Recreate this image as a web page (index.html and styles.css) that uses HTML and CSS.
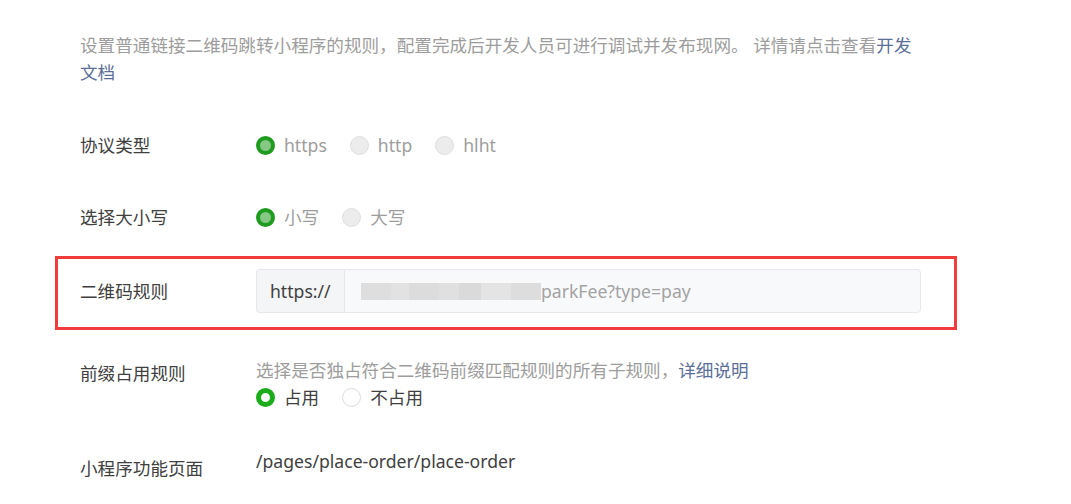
FILE: index.html
```html
<!DOCTYPE html>
<html lang="zh-CN">
<head>
    <meta charset="UTF-8">
    <meta name="viewport" content="width=device-width, initial-scale=1.0">
    <title>扫普通链接二维码打开小程序</title>
    <link rel="stylesheet" href="styles.css">
</head>
<body>
    <div class="page">
        <p class="intro">
            设置普通链接二维码跳转小程序的规则，配置完成后开发人员可进行调试并发布现网。 详情请点击查看<a href="#" class="link">开发文档</a>
        </p>

        <div class="form-row row-protocol">
            <div class="label">协议类型</div>
            <div class="control radios">
                <label class="radio disabled checked"><span class="dot"></span>https</label>
                <label class="radio disabled"><span class="dot"></span>http</label>
                <label class="radio disabled"><span class="dot"></span>hlht</label>
            </div>
        </div>

        <div class="form-row row-case">
            <div class="label">选择大小写</div>
            <div class="control radios">
                <label class="radio disabled checked"><span class="dot"></span>小写</label>
                <label class="radio disabled"><span class="dot"></span>大写</label>
            </div>
        </div>

        <div class="form-row row-rule highlight">
            <div class="label">二维码规则</div>
            <div class="control input-group">
                <span class="prefix">https://</span>
                <div class="input">
                    <span class="mosaic"></span><span class="input-text">parkFee?type=pay</span>
                </div>
            </div>
        </div>

        <div class="form-row row-prefix top">
            <div class="label offset-small">前缀占用规则</div>
            <div class="control">
                <div class="hint">选择是否独占符合二维码前缀匹配规则的所有子规则，<a href="#" class="link">详细说明</a></div>
                <div class="radios">
                    <label class="radio checked"><span class="dot"></span>占用</label>
                    <label class="radio"><span class="dot"></span>不占用</label>
                </div>
            </div>
        </div>

        <div class="form-row row-page top">
            <div class="label offset-large">小程序功能页面</div>
            <div class="control value">/pages/place-order/place-order</div>
        </div>
    </div>
</body>
</html>
```

FILE: styles.css
```css
body {
    margin: 0;
    background-color: #fff;
    font-family: "Noto Sans", "Noto Sans CJK SC", sans-serif;
    font-size: 17.6px;
    color: #404040;
}

.page {
    width: 841px;
    padding: 32px 0 0 80px;
}

.intro {
    margin: 0;
    line-height: 27px;
    color: #9d9d9d;
}

.link {
    color: #5a6e98;
    text-decoration: none;
}

.form-row {
    display: flex;
    align-items: center;
    line-height: 27px;
}

.form-row.top {
    align-items: flex-start;
}

.label {
    width: 176px;
    flex-shrink: 0;
}

.offset-small {
    padding-top: 3px;
}

.offset-large {
    padding-top: 7px;
}

.control {
    flex: 1;
}

.row-protocol {
    margin-top: 39px;
    height: 40px;
}

.row-case {
    margin-top: 32px;
    height: 40px;
}

.row-rule {
    margin-top: 19px;
}

.row-prefix {
    margin-top: 27px;
}

.row-page {
    margin-top: 37px;
}

/* red annotation frame round the rule row */
.highlight {
    border: 3px solid #f23b3b;
    margin-left: -25px;
    margin-right: -36px;
    padding: 10px 33px 14px 22px;
}

/* radios */
.radios {
    display: flex;
    align-items: center;
}

.radio {
    display: flex;
    align-items: center;
    margin-right: 23px;
    height: 27px;
}

.radio .dot {
    box-sizing: border-box;
    width: 19px;
    height: 19px;
    border-radius: 50%;
    border: 1px solid #dcdcdc;
    background-color: #fff;
    margin-right: 9px;
}

.radio.checked .dot {
    border: 5px solid #1aad19;
    background-color: #fff;
}

.radio.disabled {
    color: #9d9d9d;
}

.radio.disabled .dot {
    background-color: #ececec;
    border-color: #dedede;
}

.radio.disabled.checked .dot {
    border: 4px solid #1f9b1f;
    background-color: #84c884;
}

/* input group */
.input-group {
    display: flex;
    height: 44px;
}

.prefix {
    box-sizing: border-box;
    width: 88px;
    padding-left: 13px;
    display: flex;
    align-items: center;
    background-color: #f4f5f7;
    border: 1px solid #e6e8ec;
    border-right: none;
    border-radius: 4px 0 0 4px;
}

.input {
    flex: 1;
    display: flex;
    align-items: center;
    padding-left: 16px;
    background-color: #f8f9fb;
    border: 1px solid #e6e8ec;
    border-radius: 0 4px 4px 0;
    color: #a3a3a3;
}

.mosaic {
    display: inline-block;
    width: 180px;
    height: 17px;
    background: linear-gradient(to right,
        #dedede 0, #dedede 30px,
        #e2e2e2 30px, #e2e2e2 48px,
        #dcdcdc 48px, #dcdcdc 78px,
        #e0e0e0 78px, #e0e0e0 98px,
        #dadada 98px, #dadada 120px,
        #e4e4e4 120px, #e4e4e4 150px,
        #dddddd 150px, #dddddd 180px);
}

.hint {
    color: #9d9d9d;
}

.value {
    color: #404040;
}
```
